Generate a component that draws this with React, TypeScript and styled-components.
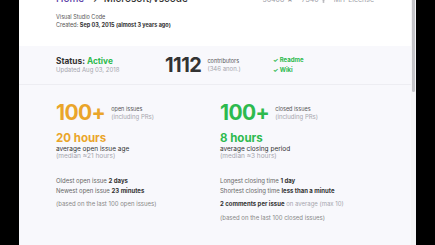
import React from "react";
import styled, { createGlobalStyle } from "styled-components";

const GlobalStyle = createGlobalStyle`
  html, body { margin: 0; padding: 0; background: #000; }
  body { font-family: Inter, "Noto Sans", sans-serif; -webkit-font-smoothing: antialiased; }
`;

const Page = styled.div`
  display: flex;
  height: 245px;
  padding-left: 19px;
  overflow: hidden;
`;

const Panel = styled.div`
  width: 392px;
  display: flex;
  flex-direction: column;
  background: #f8f8fc;
  overflow: hidden;
`;

const Scrollbar = styled.div`
  width: 5px;
  background: #f4f4f6;
  display: flex;
  justify-content: flex-start;
`;

const Thumb = styled.div`
  width: 3px;
  height: 92px;
  margin-left: 1px;
  background: #c4c4c8;
  border-radius: 0 0 2px 2px;
`;

const Header = styled.header`
  background: #fff;
  height: 54px;
  margin-top: -8px;
  padding: 0 37px;
  flex-shrink: 0;
  display: flex;
  flex-direction: column;
`;

const TitleRow = styled.div`
  display: flex;
  align-items: baseline;
  justify-content: space-between;
  height: 16px;
`;

const Title = styled.h1`
  margin: 0;
  font-size: 10px;
  font-weight: 500;
  color: #333;
  display: flex;
  gap: 5px;
`;

const HomeLink = styled.span`
  color: #5b3fa8;
`;

const RepoStats = styled.div`
  display: flex;
  align-items: center;
  gap: 8px;
  font-size: 7px;
  color: #a0a0a8;
`;

const StatItem = styled.span`
  display: inline-flex;
  align-items: center;
  gap: 2px;
`;

const Meta = styled.div`
  margin-top: 6px;
  font-size: 5.5px;
  color: #555;
  line-height: 7.5px;
`;

const Bold = styled.b`
  font-weight: 700;
  color: #333;
`;

const StatusBar = styled.section`
  display: grid;
  grid-template-columns: 109px 108px 1fr;
  align-items: center;
  height: 38px;
  flex-shrink: 0;
  padding: 0 37px;
  border-bottom: 1px solid #ededf2;
`;

const StatusTitle = styled.div`
  font-size: 8.3px;
  font-weight: 700;
  color: #333;
  line-height: 10px;
`;

const Green = styled.span`
  color: #2dba4e;
`;

const Sub = styled.div`
  font-size: 6px;
  color: #a5a5ad;
  line-height: 8px;
`;

const Contributors = styled.div`
  display: flex;
  align-items: center;
  gap: 6px;
`;

const BigNum = styled.div`
  font-size: 20px;
  font-weight: 700;
  color: #333;
  letter-spacing: -0.5px;
`;

const SmallLabel = styled.div`
  font-size: 5.5px;
  color: #555;
  line-height: 8px;
`;

const Checks = styled.div`
  display: flex;
  flex-direction: column;
  gap: 2px;
  font-size: 6px;
  font-weight: 700;
  color: #2dba4e;
  line-height: 8px;
`;

const Stats = styled.section`
  display: grid;
  grid-template-columns: 164px 1fr;
  padding: 16px 37px 0;
`;

const Column = styled.div`
  display: flex;
  flex-direction: column;
`;

const CountRow = styled.div`
  display: flex;
  align-items: center;
  gap: 6px;
`;

const Count = styled.div<{ $color: string }>`
  font-size: 21px;
  font-weight: 700;
  line-height: 24px;
  letter-spacing: -0.6px;
  color: ${(p) => p.$color};
`;

const Hours = styled.div<{ $color: string }>`
  margin-top: 6px;
  font-size: 11.5px;
  font-weight: 700;
  line-height: 14px;
  color: ${(p) => p.$color};
`;

const Desc = styled.div`
  font-size: 6.5px;
  color: #333;
  line-height: 7px;
  margin-top: 1px;
`;

const Muted = styled.div`
  font-size: 6.5px;
  color: #a5a5ad;
  line-height: 7px;
`;

const Lines = styled.div`
  margin-top: 17px;
  display: flex;
  flex-direction: column;
  gap: 3px;
  font-size: 6px;
  color: #666;
  line-height: 7px;
`;

const Note = styled.div`
  margin-top: 6px;
  font-size: 6px;
  color: #888;
  line-height: 8px;
`;

const Faint = styled.span`
  color: #a5a5ad;
`;

const ForkIcon = () => (
  <svg width="5" height="6" viewBox="0 0 10 12" fill="none" stroke="#a0a0a8" strokeWidth="1.4">
    <circle cx="2" cy="2" r="1.4" />
    <circle cx="8" cy="2" r="1.4" />
    <circle cx="5" cy="10" r="1.4" />
    <path d="M2 3.5v1.5c0 1 1 1.5 3 1.5s3-.5 3-1.5V3.5M5 6.5v2" />
  </svg>
);

export default function App() {
  const orange = "#eaa52a";
  const green = "#2dba4e";
  return (
    <>
      <GlobalStyle />
      <Page>
        <Panel>
          <Header>
            <TitleRow>
              <Title>
                <HomeLink>Home</HomeLink>
                <span>→</span>
                <span>Microsoft/vscode</span>
              </Title>
              <RepoStats>
                <StatItem>56408 ★</StatItem>
                <StatItem>
                  7340 <ForkIcon />
                </StatItem>
                <StatItem>MIT License</StatItem>
              </RepoStats>
            </TitleRow>
            <Meta>
              <div>Visual Studio Code</div>
              <div>
                Created: <Bold>Sep 03, 2015 (almost 3 years ago)</Bold>
              </div>
            </Meta>
          </Header>
          <StatusBar>
            <div>
              <StatusTitle>
                Status: <Green>Active</Green>
              </StatusTitle>
              <Sub>Updated Aug 03, 2018</Sub>
            </div>
            <Contributors>
              <BigNum>1112</BigNum>
              <div>
                <SmallLabel>contributors</SmallLabel>
                <Sub>(346 anon.)</Sub>
              </div>
            </Contributors>
            <Checks>
              <span>✓ Readme</span>
              <span>✓ Wiki</span>
            </Checks>
          </StatusBar>
          <Stats>
            <Column>
              <CountRow>
                <Count $color={orange}>100+</Count>
                <div>
                  <SmallLabel>open issues</SmallLabel>
                  <Sub>(including PRs)</Sub>
                </div>
              </CountRow>
              <Hours $color={orange}>20 hours</Hours>
              <Desc>average open issue age</Desc>
              <Muted>(median ≈21 hours)</Muted>
              <Lines>
                <div>
                  Oldest open issue <Bold>2 days</Bold>
                </div>
                <div>
                  Newest open issue <Bold>23 minutes</Bold>
                </div>
              </Lines>
              <Note>(based on the last 100 open issues)</Note>
            </Column>
            <Column>
              <CountRow>
                <Count $color={green}>100+</Count>
                <div>
                  <SmallLabel>closed issues</SmallLabel>
                  <Sub>(including PRs)</Sub>
                </div>
              </CountRow>
              <Hours $color={green}>8 hours</Hours>
              <Desc>average closing period</Desc>
              <Muted>(median ≈3 hours)</Muted>
              <Lines>
                <div>
                  Longest closing time <Bold>1 day</Bold>
                </div>
                <div>
                  Shortest closing time <Bold>less than a minute</Bold>
                </div>
              </Lines>
              <Note>
                <Bold>2 comments per issue</Bold> <Faint>on average (max 10)</Faint>
              </Note>
              <Note>(based on the last 100 closed issues)</Note>
            </Column>
          </Stats>
        </Panel>
        <Scrollbar>
          <Thumb />
        </Scrollbar>
      </Page>
    </>
  );
}
